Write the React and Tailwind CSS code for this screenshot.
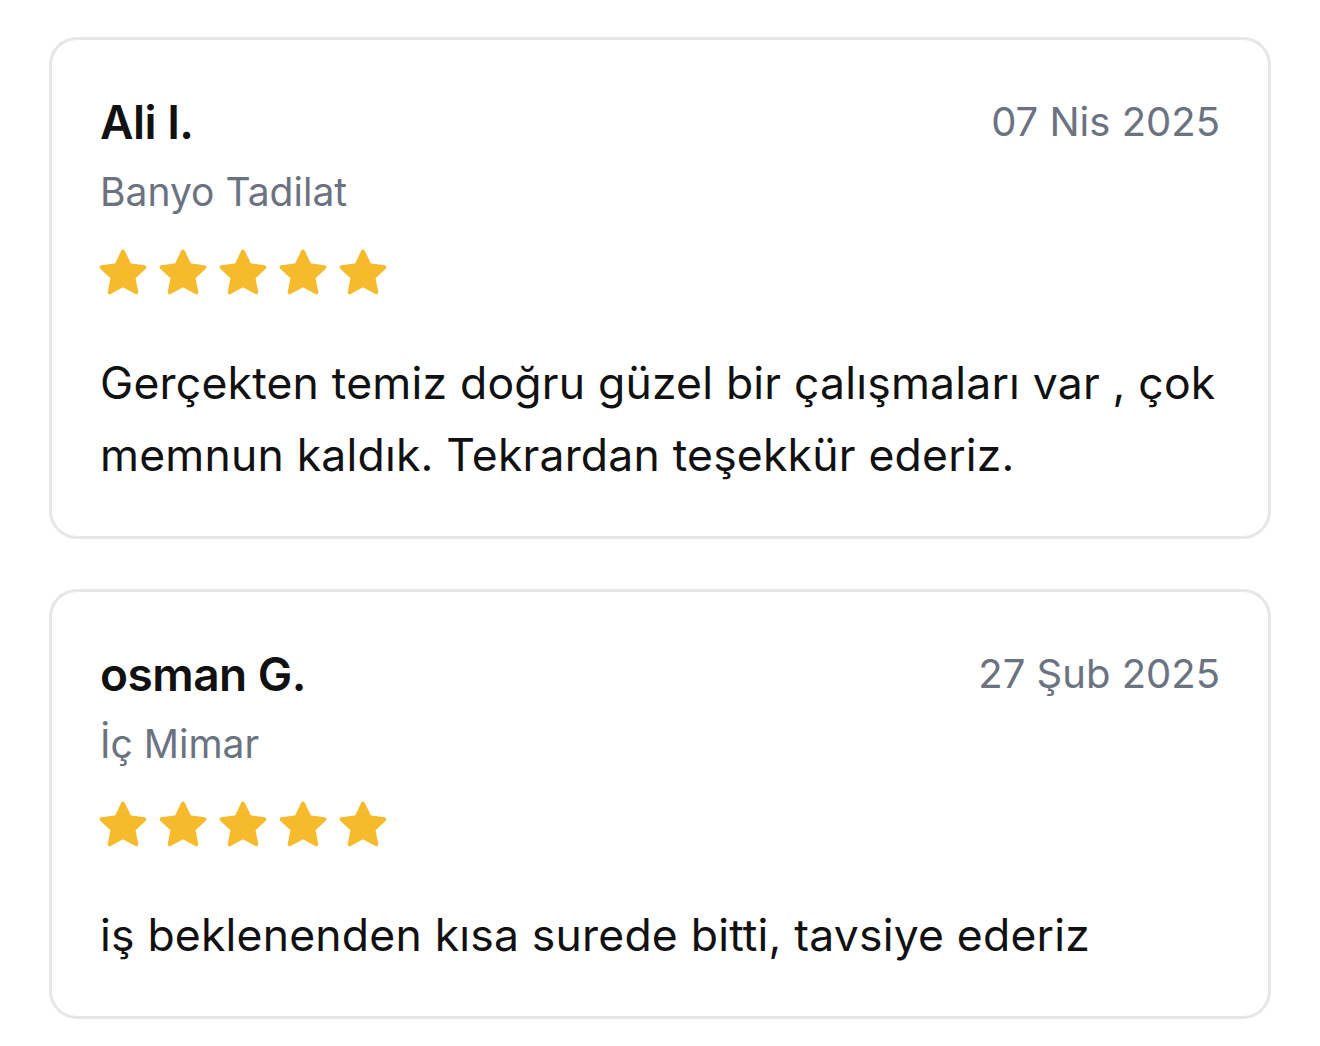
import React from 'react';

const reviews = [
  {
    name: 'Ali I.',
    service: 'Banyo Tadilat',
    date: '07 Nis 2025',
    rating: 5,
    text: 'Gerçekten temiz doğru güzel bir çalışmaları var , çok memnun kaldık. Tekrardan teşekkür ederiz.',
  },
  {
    name: 'osman G.',
    service: 'İç Mimar',
    date: '27 Şub 2025',
    rating: 5,
    text: 'iş beklenenden kısa surede bitti, tavsiye ederiz',
  },
];

function Star() {
  return (
    <svg viewBox="0 0 24 24" className="w-[54px] h-[54px]" fill="#F5BB2C" stroke="#F5BB2C" strokeWidth="1.8" strokeLinejoin="round">
      <path d="M12 2.5l2.9 6.1 6.6.8-4.9 4.6 1.3 6.6L12 17.3l-5.9 3.3 1.3-6.6-4.9-4.6 6.6-.8z" />
    </svg>
  );
}

function ReviewCard({ review }) {
  return (
    <div className="border-[3px] border-[#e6e6e6] rounded-[28px] bg-white px-[48px] pt-[46px] pb-[45px]">
      <div className="flex items-start justify-between">
        <div className="text-[46px] leading-[72px] font-semibold text-[#111111] tracking-[-0.5px]">{review.name}</div>
        <div className="text-[40px] leading-[72px] text-[#6b7280]">{review.date}</div>
      </div>
      <div className="text-[39px] leading-[60px] text-[#6b7280] mt-[4px]">{review.service}</div>
      <div className="flex items-center gap-[6px] mt-[24px] -ml-[4px]">
        {Array.from({ length: review.rating }).map((_, i) => <Star key={i} />)}
      </div>
      <div className="mt-[47px] text-[44.5px] leading-[72px] tracking-[0.2px] text-[#111111]">{review.text}</div>
    </div>
  );
}

export default function App() {
  return (
    <div className="min-h-[1046px] bg-white px-[49px] pt-[37px] pb-[27px] flex flex-col gap-[50px]" style={{ fontFamily: 'Inter, "Noto Sans", sans-serif' }}>
      {reviews.map((r) => <ReviewCard key={r.name} review={r} />)}
    </div>
  );
}
